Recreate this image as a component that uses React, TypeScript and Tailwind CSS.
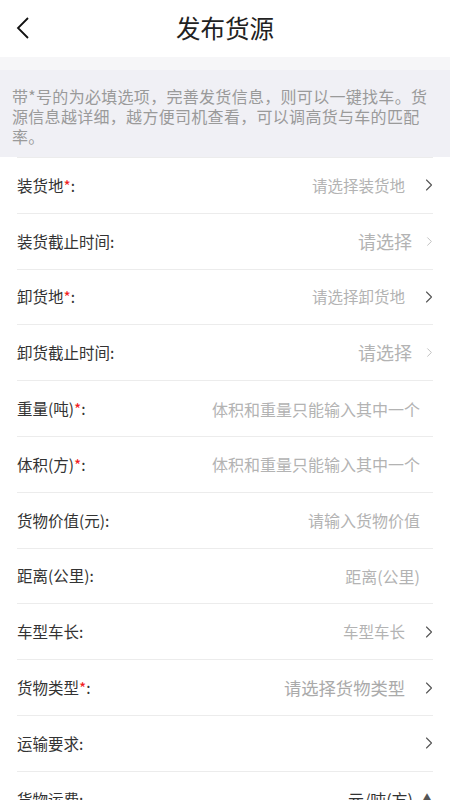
import { ChevronRight } from "lucide-react";

const font = "font-['Noto_Sans_CJK_SC','Noto_Sans',sans-serif]";

type Row = {
  label: string;
  required?: boolean;
  value?: string;
  big?: boolean;
  kind: "select" | "pick" | "input" | "unit";
};

const rows: Row[] = [
  { label: "装货地", required: true, value: "请选择装货地", kind: "select" },
  { label: "装货截止时间", value: "请选择", kind: "pick" },
  { label: "卸货地", required: true, value: "请选择卸货地", kind: "select" },
  { label: "卸货截止时间", value: "请选择", kind: "pick" },
  { label: "重量(吨)", required: true, value: "体积和重量只能输入其中一个", kind: "input" },
  { label: "体积(方)", required: true, value: "体积和重量只能输入其中一个", kind: "input" },
  { label: "货物价值(元)", value: "请输入货物价值", kind: "input" },
  { label: "距离(公里)", value: "距离(公里)", kind: "input" },
  { label: "车型车长", value: "车型车长", kind: "select" },
  { label: "货物类型", required: true, value: "请选择货物类型", big: true, kind: "select" },
  { label: "运输要求", kind: "select" },
  { label: "货物运费", value: "元/吨(方)", kind: "unit" },
];

function FormRow({ row }: { row: Row }) {
  return (
    <div className="mx-[17px] flex h-[55.8px] items-center border-b border-[#ececec]">
      <div className="text-[15.5px] text-[#333]">
        {row.label}
        {row.required && <span className="text-[#f21b1b]">*</span>}:
      </div>
      <div className="flex-1" />
      {row.kind === "select" && (
        <>
          <span className={row.big ? "text-[17.3px] text-[#aaa]" : "text-[15.5px] text-[#b3b3b3]"}>{row.value}</span>
          <ChevronRight className="ml-[14px] mr-[-6px] h-[20px] w-[20px] text-[#555]" strokeWidth={1.3} />
        </>
      )}
      {row.kind === "pick" && (
        <>
          <span className="text-[18px] text-[#b3b3b3]">{row.value}</span>
          <ChevronRight className="ml-[10px] mr-[-4px] h-[15px] w-[15px] text-[#bdbdbd]" strokeWidth={1.5} />
        </>
      )}
      {row.kind === "input" && (
        <span className="mr-[13px] text-[16px] text-[#b3b3b3]">{row.value}</span>
      )}
      {row.kind === "unit" && (
        <>
          <span className="text-[16px] text-[#333]">{row.value}</span>
          <span className="ml-[8px] text-[12px] text-[#555]">▲</span>
        </>
      )}
    </div>
  );
}

export default function App() {
  return (
    <div className={`h-[800px] w-[450px] overflow-hidden bg-white ${font}`}>
      <div className="relative flex h-[57px] items-center justify-center bg-white">
        <svg className="absolute left-[15px] top-[16px]" width="16" height="24" viewBox="0 0 16 24">
          <path d="M13 2 L3 12 L13 22" fill="none" stroke="#111" strokeWidth="1.8" />
        </svg>
        <h1 className="text-[24.5px] text-[#222]">发布货源</h1>
      </div>
      <div className="h-[13px] bg-[#f6f6f8]" />
      <div className="bg-[#f0f0f5] pb-[11px] pl-[12px] pr-[20px] pt-[16px] text-[16px] leading-[20px] tracking-[0.3px] text-[#9a9a9a]">
        带*号的为必填选项，完善发货信息，则可以一键找车。货源信息越详细，越方便司机查看，可以调高货与车的匹配率。
      </div>
      <div className="mx-[17px] border-t border-[#ececec]" />
      {rows.map((r) => (
        <FormRow key={r.label} row={r} />
      ))}
    </div>
  );
}
